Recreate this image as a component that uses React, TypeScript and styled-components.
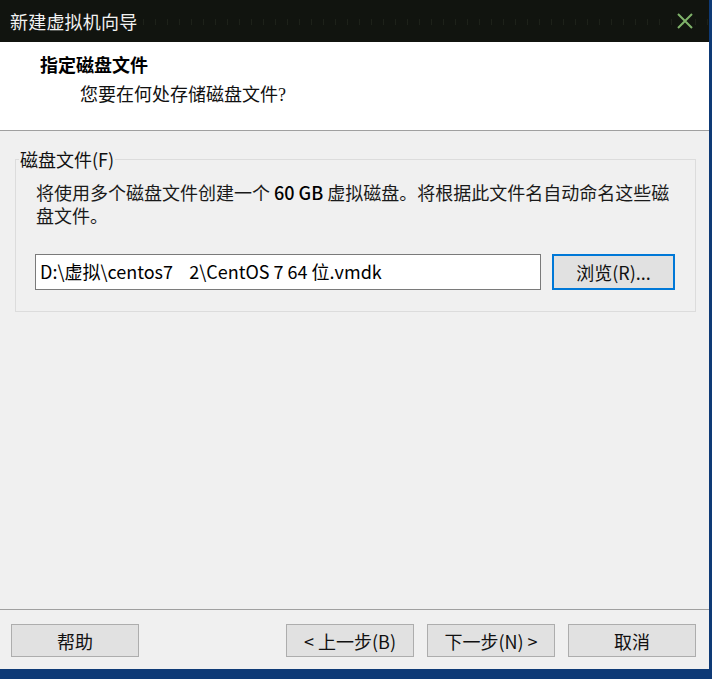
import React from "react";
import styled, { createGlobalStyle } from "styled-components";

const GlobalStyle = createGlobalStyle`
  html, body { margin: 0; padding: 0; background: #0e3a76; }
  body { font-family: "Noto Sans CJK SC", "Noto Sans", sans-serif; }
`;

const Window = styled.div`
  width: 709px;
  height: 669px;
  display: flex;
  flex-direction: column;
  background: #f0f0f0;
`;

const TitleBar = styled.div`
  height: 42px;
  flex: none;
  display: flex;
  align-items: center;
  justify-content: space-between;
  padding: 0 16px 0 10px;
  background-color: #11140f;
  background-image: repeating-linear-gradient(
    90deg,
    transparent 0 11px,
    rgba(120, 130, 100, 0.12) 11px 12px
  );
  background-size: 100% 6px;
  background-repeat: repeat-x;
  background-position: 0 19px;
`;

const TitleText = styled.span`
  color: #f2f2f2;
  font-size: 18px;
  letter-spacing: 0.2px;
  font-family: "Noto Sans CJK SC", sans-serif;
`;

const Header = styled.div`
  height: 89px;
  flex: none;
  background: #ffffff;
  border-bottom: 1px solid #a0a0a0;
  padding: 11px 0 0 40px;
  box-sizing: border-box;
  display: flex;
  flex-direction: column;
`;

const HeaderTitle = styled.div`
  font-family: "Liberation Serif", "Noto Sans CJK SC", serif;
  font-weight: bold;
  font-size: 18px;
  line-height: 26px;
  color: #000;
`;

const HeaderSub = styled.div`
  font-family: "Liberation Serif", "Noto Sans CJK SC", serif;
  font-size: 18px;
  line-height: 26px;
  color: #111;
  margin: 3px 0 0 40px;
`;

const Body = styled.div`
  flex: 1;
  padding: 17px 14px 0 15px;
`;

const GroupBox = styled.fieldset`
  margin: 0;
  padding: 0 20px 20px 20px;
  border: 1px solid #dcdcdc;
  height: 164px;
  box-sizing: border-box;
`;

const Legend = styled.legend`
  margin-left: -17px;
  padding: 0 1px;
  font-size: 18px;
  line-height: 22px;
  color: #111;
`;

const Description = styled.p`
  font-size: 18px;
  line-height: 23px;
  color: #1a1a1a;
  margin: 11px 0 0 0;
  & b {
    font-weight: 500;
    color: #000;
  }
`;

const PathRow = styled.div`
  display: flex;
  gap: 11px;
  margin-top: 27px;
  margin-left: -1px;
`;

const PathInput = styled.div`
  width: 506px;
  height: 36px;
  box-sizing: border-box;
  border: 1px solid #7a7a7a;
  background: #fff;
  padding: 0 4px;
  font-size: 18px;
  line-height: 32px;
  white-space: pre;
  color: #000;
`;

const Button = styled.button<{ $focused?: boolean }>`
  width: ${(p) => (p.$focused ? "123px" : "128px")};
  height: ${(p) => (p.$focused ? "36px" : "33px")};
  box-sizing: border-box;
  background: #e1e1e1;
  border: ${(p) => (p.$focused ? "2px solid #0078d7" : "1px solid #adadad")};
  font-family: "Noto Sans CJK SC", "Noto Sans", sans-serif;
  font-size: 18px;
  color: #111;
  padding: 0;
  display: flex;
  align-items: center;
  justify-content: center;
`;

const Footer = styled.div`
  flex: none;
  border-top: 1px solid #a0a0a0;
  padding: 14px 13px 12px 11px;
  display: flex;
  align-items: center;
`;

const Spacer = styled.div`
  flex: 1;
`;

const FooterGroup = styled.div`
  display: flex;
  gap: 13px;
`;

const CloseIcon = () => (
  <svg width="16" height="16" viewBox="0 0 16 16">
    <path d="M1 1 L15 15 M15 1 L1 15" stroke="#7fb36a" strokeWidth="2" />
  </svg>
);

export default function App() {
  return (
    <>
      <GlobalStyle />
      <Window>
        <TitleBar>
          <TitleText>新建虚拟机向导</TitleText>
          <CloseIcon />
        </TitleBar>
        <Header>
          <HeaderTitle>指定磁盘文件</HeaderTitle>
          <HeaderSub>您要在何处存储磁盘文件?</HeaderSub>
        </Header>
        <Body>
          <GroupBox>
            <Legend>磁盘文件(F)</Legend>
            <Description>
              将使用多个磁盘文件创建一个 <b>60 GB</b> 虚拟磁盘。将根据此文件名自动命名这些磁盘文件。
            </Description>
            <PathRow>
              <PathInput>{"D:\\虚拟\\centos7    2\\CentOS 7 64 位.vmdk"}</PathInput>
              <Button $focused>浏览(R)...</Button>
            </PathRow>
          </GroupBox>
        </Body>
        <Footer>
          <Button>帮助</Button>
          <Spacer />
          <FooterGroup>
            <Button>&lt; 上一步(B)</Button>
            <Button>下一步(N) &gt;</Button>
            <Button>取消</Button>
          </FooterGroup>
        </Footer>
      </Window>
    </>
  );
}
